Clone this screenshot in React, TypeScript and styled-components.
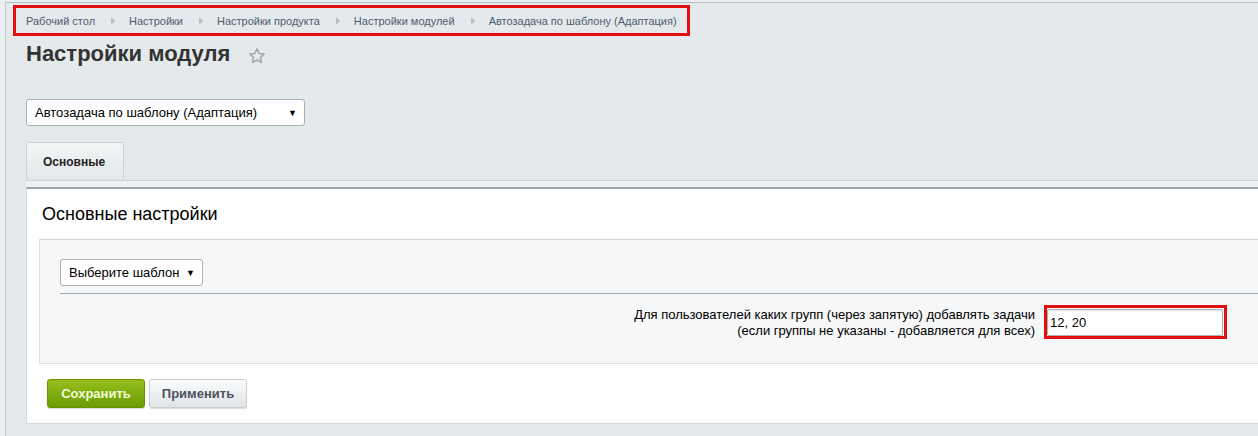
import styled, { createGlobalStyle } from "styled-components";

const GlobalStyle = createGlobalStyle`
  html, body {
    margin: 0;
    padding: 0;
    background: #e9eef0;
    font-family: "Liberation Sans", Arial, sans-serif;
    overflow: hidden;
  }
`;

const Page = styled.div`
  margin: 2px 0 0 5px;
  min-height: 440px;
  border-top: 1px solid #b4bdc1;
  border-left: 1px solid #c3cbcf;
  background: #e4eaec;
  padding-left: 20px;
`;

const Crumbs = styled.div`
  display: inline-flex;
  align-items: center;
  margin: 2px 0 0 -13px;
  height: 25px;
  padding: 0 10px 0 10px;
  border: 3px solid #e01010;
`;

const Crumb = styled.span`
  font-size: 11px;
  color: #4f5b6e;
`;

const CrumbArrow = styled.span`
  width: 0;
  height: 0;
  margin: 0 14px 0 16px;
  border-top: 4px solid transparent;
  border-bottom: 4px solid transparent;
  border-left: 4px solid #b7bec3;
`;

const TitleRow = styled.div`
  display: flex;
  align-items: center;
  margin-top: 4px;
  height: 28px;
`;

const Title = styled.h1`
  margin: 0;
  font-size: 22px;
  font-weight: bold;
  color: #333;
`;

const Star = styled.svg`
  margin-left: 18px;
  margin-top: 3px;
`;

const Dropdown = styled.div<{ $width: number }>`
  display: flex;
  align-items: center;
  justify-content: space-between;
  box-sizing: border-box;
  width: ${(p) => p.$width}px;
  height: 27px;
  padding: 0 7px 0 8px;
  background: #fff;
  border: 1px solid #a8aeb2;
  border-radius: 3px;
  font-size: 13px;
  color: #000;
`;

const Arrow = styled.span`
  font-size: 9px;
  color: #000;
`;

const ModuleSelect = styled.div`
  margin-top: 31px;
`;

const TabsRow = styled.div`
  display: flex;
  margin-top: 16px;
  border-bottom: 1px solid #cbd3d6;
`;

const Tab = styled.div`
  box-sizing: border-box;
  width: 98px;
  height: 38px;
  display: flex;
  align-items: center;
  padding-left: 16px;
  font-size: 12px;
  font-weight: bold;
  color: #222;
  border: 1px solid #ccd3d6;
  border-bottom: none;
  border-radius: 2px 2px 0 0;
  background: linear-gradient(#f2f4f5, #e3e8ea);
`;

const Strip = styled.div`
  height: 6px;
  background: #edf1f2;
`;

const Panel = styled.div`
  background: #fff;
  border-top: 2px solid #9da5a9;
  border-left: 1px solid #d3dadd;
  border-bottom: 1px solid #d3dadd;
  padding: 14px 0 15px 12px;
`;

const PanelTitle = styled.div`
  font-size: 18px;
  line-height: 22px;
  color: #000;
  margin-left: 3px;
`;

const Section = styled.div`
  margin-top: 14px;
  background: #f5f7f8;
  border-top: 1px solid #cfd6d9;
  border-left: 1px solid #d9dfe1;
  border-bottom: 1px solid #dbe1e3;
  padding: 19px 0 24px 20px;
`;

const Divider = styled.div`
  margin-top: 7px;
  border-top: 1px solid #a2a7aa;
`;

const FieldRow = styled.div`
  display: grid;
  grid-template-columns: 975px 183px;
  column-gap: 9px;
  margin-top: 11px;
  align-items: start;
`;

const FieldLabel = styled.div`
  text-align: right;
  font-size: 13px;
  line-height: 16px;
  color: #000;
  padding-top: 2px;
`;

const Highlight = styled.div`
  border: 3px solid #e01010;
  padding: 1px 1px 0 0;
`;

const TextInput = styled.input`
  display: block;
  box-sizing: border-box;
  width: 176px;
  height: 27px;
  padding: 0 2px;
  border: 1px solid #a9b0b4;
  border-radius: 2px;
  box-shadow: inset 0 1px 2px rgba(0, 0, 0, 0.12);
  font-family: "Liberation Sans", Arial, sans-serif;
  font-size: 13px;
  color: #000;
  outline: none;
`;

const Buttons = styled.div`
  display: flex;
  gap: 4px;
  margin: 15px 0 0 8px;
`;

const Button = styled.button<{ $primary?: boolean }>`
  box-sizing: border-box;
  width: 98px;
  height: 29px;
  border-radius: 3px;
  font-family: "Liberation Sans", Arial, sans-serif;
  font-size: 13px;
  font-weight: bold;
  cursor: pointer;
  border: 1px solid ${(p) => (p.$primary ? "#6a9100" : "#c8ced1")};
  color: ${(p) => (p.$primary ? "#f4fbd8" : "#4c545c")};
  background: ${(p) =>
    p.$primary
      ? "linear-gradient(#95bf1c, #6b9b06)"
      : "linear-gradient(#fbfcfc, #dfe4e7)"};
  box-shadow: 0 1px 1px rgba(0, 0, 0, 0.15);
`;

const crumbs = [
  "Рабочий стол",
  "Настройки",
  "Настройки продукта",
  "Настройки модулей",
  "Автозадача по шаблону (Адаптация)",
];

export default function App() {
  return (
    <>
      <GlobalStyle />
      <Page>
        <Crumbs>
          {crumbs.map((c, i) => (
            <span key={c} style={{ display: "contents" }}>
              {i > 0 && <CrumbArrow />}
              <Crumb>{c}</Crumb>
            </span>
          ))}
        </Crumbs>
        <TitleRow>
          <Title>Настройки модуля</Title>
          <Star width="18" height="18" viewBox="0 0 24 24">
            <path
              d="M12 2.5l2.9 6.1 6.6.8-4.9 4.6 1.3 6.6L12 17.3l-5.9 3.3 1.3-6.6-4.9-4.6 6.6-.8z"
              fill="none"
              stroke="#9ea6ab"
              strokeWidth="2"
              strokeLinejoin="round"
            />
          </Star>
        </TitleRow>
        <ModuleSelect>
          <Dropdown $width={279}>
            <span>Автозадача по шаблону (Адаптация)</span>
            <Arrow>▼</Arrow>
          </Dropdown>
        </ModuleSelect>
        <TabsRow>
          <Tab>Основные</Tab>
        </TabsRow>
        <Strip />
        <Panel>
          <PanelTitle>Основные настройки</PanelTitle>
          <Section>
            <Dropdown $width={143}>
              <span>Выберите шаблон</span>
              <Arrow>▼</Arrow>
            </Dropdown>
            <Divider />
            <FieldRow>
              <FieldLabel>
                Для пользователей каких групп (через запятую) добавлять задачи
                <br />
                (если группы не указаны - добавляется для всех)
              </FieldLabel>
              <Highlight>
                <TextInput defaultValue="12, 20" />
              </Highlight>
            </FieldRow>
          </Section>
          <Buttons>
            <Button $primary>Сохранить</Button>
            <Button>Применить</Button>
          </Buttons>
        </Panel>
      </Page>
    </>
  );
}
